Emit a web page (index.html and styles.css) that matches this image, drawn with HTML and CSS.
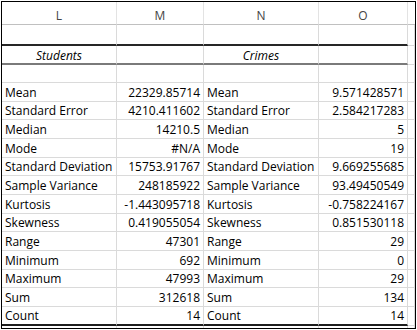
FILE: index.html
```html
<!DOCTYPE html>
<html>
<head>
<meta charset="utf-8">
<link rel="stylesheet" href="styles.css">
</head>
<body>
<div class="sheet">
  <div class="hd">L</div><div class="hd">M</div><div class="hd">N</div><div class="hd">O</div><div class="hd hd-x"></div>

  <div class="c top"></div><div class="c top"></div><div class="c top"></div><div class="c top"></div><div class="c"></div>

  <div class="c sub ttl">Students</div><div class="c sub"></div><div class="c sub ttl">Crimes</div><div class="c sub"></div><div class="c"></div>

  <div class="c"></div><div class="c"></div><div class="c"></div><div class="c"></div><div class="c"></div>

  <div class="c lbl">Mean</div><div class="c num">22329.85714</div><div class="c lbl">Mean</div><div class="c num">9.571428571</div><div class="c"></div>
  <div class="c lbl">Standard Error</div><div class="c num">4210.411602</div><div class="c lbl">Standard Error</div><div class="c num">2.584217283</div><div class="c"></div>
  <div class="c lbl">Median</div><div class="c num">14210.5</div><div class="c lbl">Median</div><div class="c num">5</div><div class="c"></div>
  <div class="c lbl">Mode</div><div class="c num">#N/A</div><div class="c lbl">Mode</div><div class="c num">19</div><div class="c"></div>
  <div class="c lbl">Standard Deviation</div><div class="c num">15753.91767</div><div class="c lbl">Standard Deviation</div><div class="c num">9.669255685</div><div class="c"></div>
  <div class="c lbl">Sample Variance</div><div class="c num">248185922</div><div class="c lbl">Sample Variance</div><div class="c num">93.49450549</div><div class="c"></div>
  <div class="c lbl">Kurtosis</div><div class="c num">-1.443095718</div><div class="c lbl">Kurtosis</div><div class="c num">-0.758224167</div><div class="c"></div>
  <div class="c lbl">Skewness</div><div class="c num">0.419055054</div><div class="c lbl">Skewness</div><div class="c num">0.851530118</div><div class="c"></div>
  <div class="c lbl">Range</div><div class="c num">47301</div><div class="c lbl">Range</div><div class="c num">29</div><div class="c"></div>
  <div class="c lbl">Minimum</div><div class="c num">692</div><div class="c lbl">Minimum</div><div class="c num">0</div><div class="c"></div>
  <div class="c lbl">Maximum</div><div class="c num">47993</div><div class="c lbl">Maximum</div><div class="c num">29</div><div class="c"></div>
  <div class="c lbl">Sum</div><div class="c num">312618</div><div class="c lbl">Sum</div><div class="c num">134</div><div class="c"></div>
  <div class="c lbl end">Count</div><div class="c num end">14</div><div class="c lbl end">Count</div><div class="c num end">14</div><div class="c"></div>

  <div class="c tail"></div><div class="c tail"></div><div class="c tail"></div><div class="c tail"></div><div class="c tail"></div>
</div>
</body>
</html>
```

FILE: styles.css
```css
html, body {
  margin: 0;
  padding: 0;
  background: #fff;
}

body {
  padding: 1px 0 0 1px;
}

.sheet {
  box-sizing: border-box;
  width: 415px;
  height: 328px;
  border: 1px solid #000;
  overflow: hidden;
  display: grid;
  grid-template-columns: 115px 87px 115px 89px 1fr;
  grid-template-rows: 23px 21px 19px 18px repeat(13, 18.67px) 1fr;
  font-family: "Open Sans", "Liberation Sans", sans-serif;
  font-size: 12px;
  color: #000;
}

.hd,
.c {
  box-sizing: border-box;
  display: flex;
  align-items: center;
  white-space: nowrap;
  overflow: hidden;
  line-height: 1;
}

.hd {
  justify-content: center;
  padding-top: 6px;
  color: #444;
  border-right: 1px solid #e3e3e3;
  border-bottom: 1px solid #c0c0c0;
}

.hd-x {
  border-right: none;
}

.c {
  border-right: 1px solid #dadada;
  border-bottom: 1px solid #dadada;
  padding-top: 2px;
}

.top {
  border-bottom: 2px solid #262626;
}

.sub {
  border-bottom: 2px solid #7a7a7a;
}

.end {
  border-bottom: 2px solid #1e1e1e;
}

.tail {
  border-bottom: none;
}

.ttl {
  justify-content: center;
  font-style: italic;
}

.lbl {
  justify-content: flex-start;
  padding-left: 3px;
}

.num {
  justify-content: flex-end;
  padding-right: 3px;
}
```
